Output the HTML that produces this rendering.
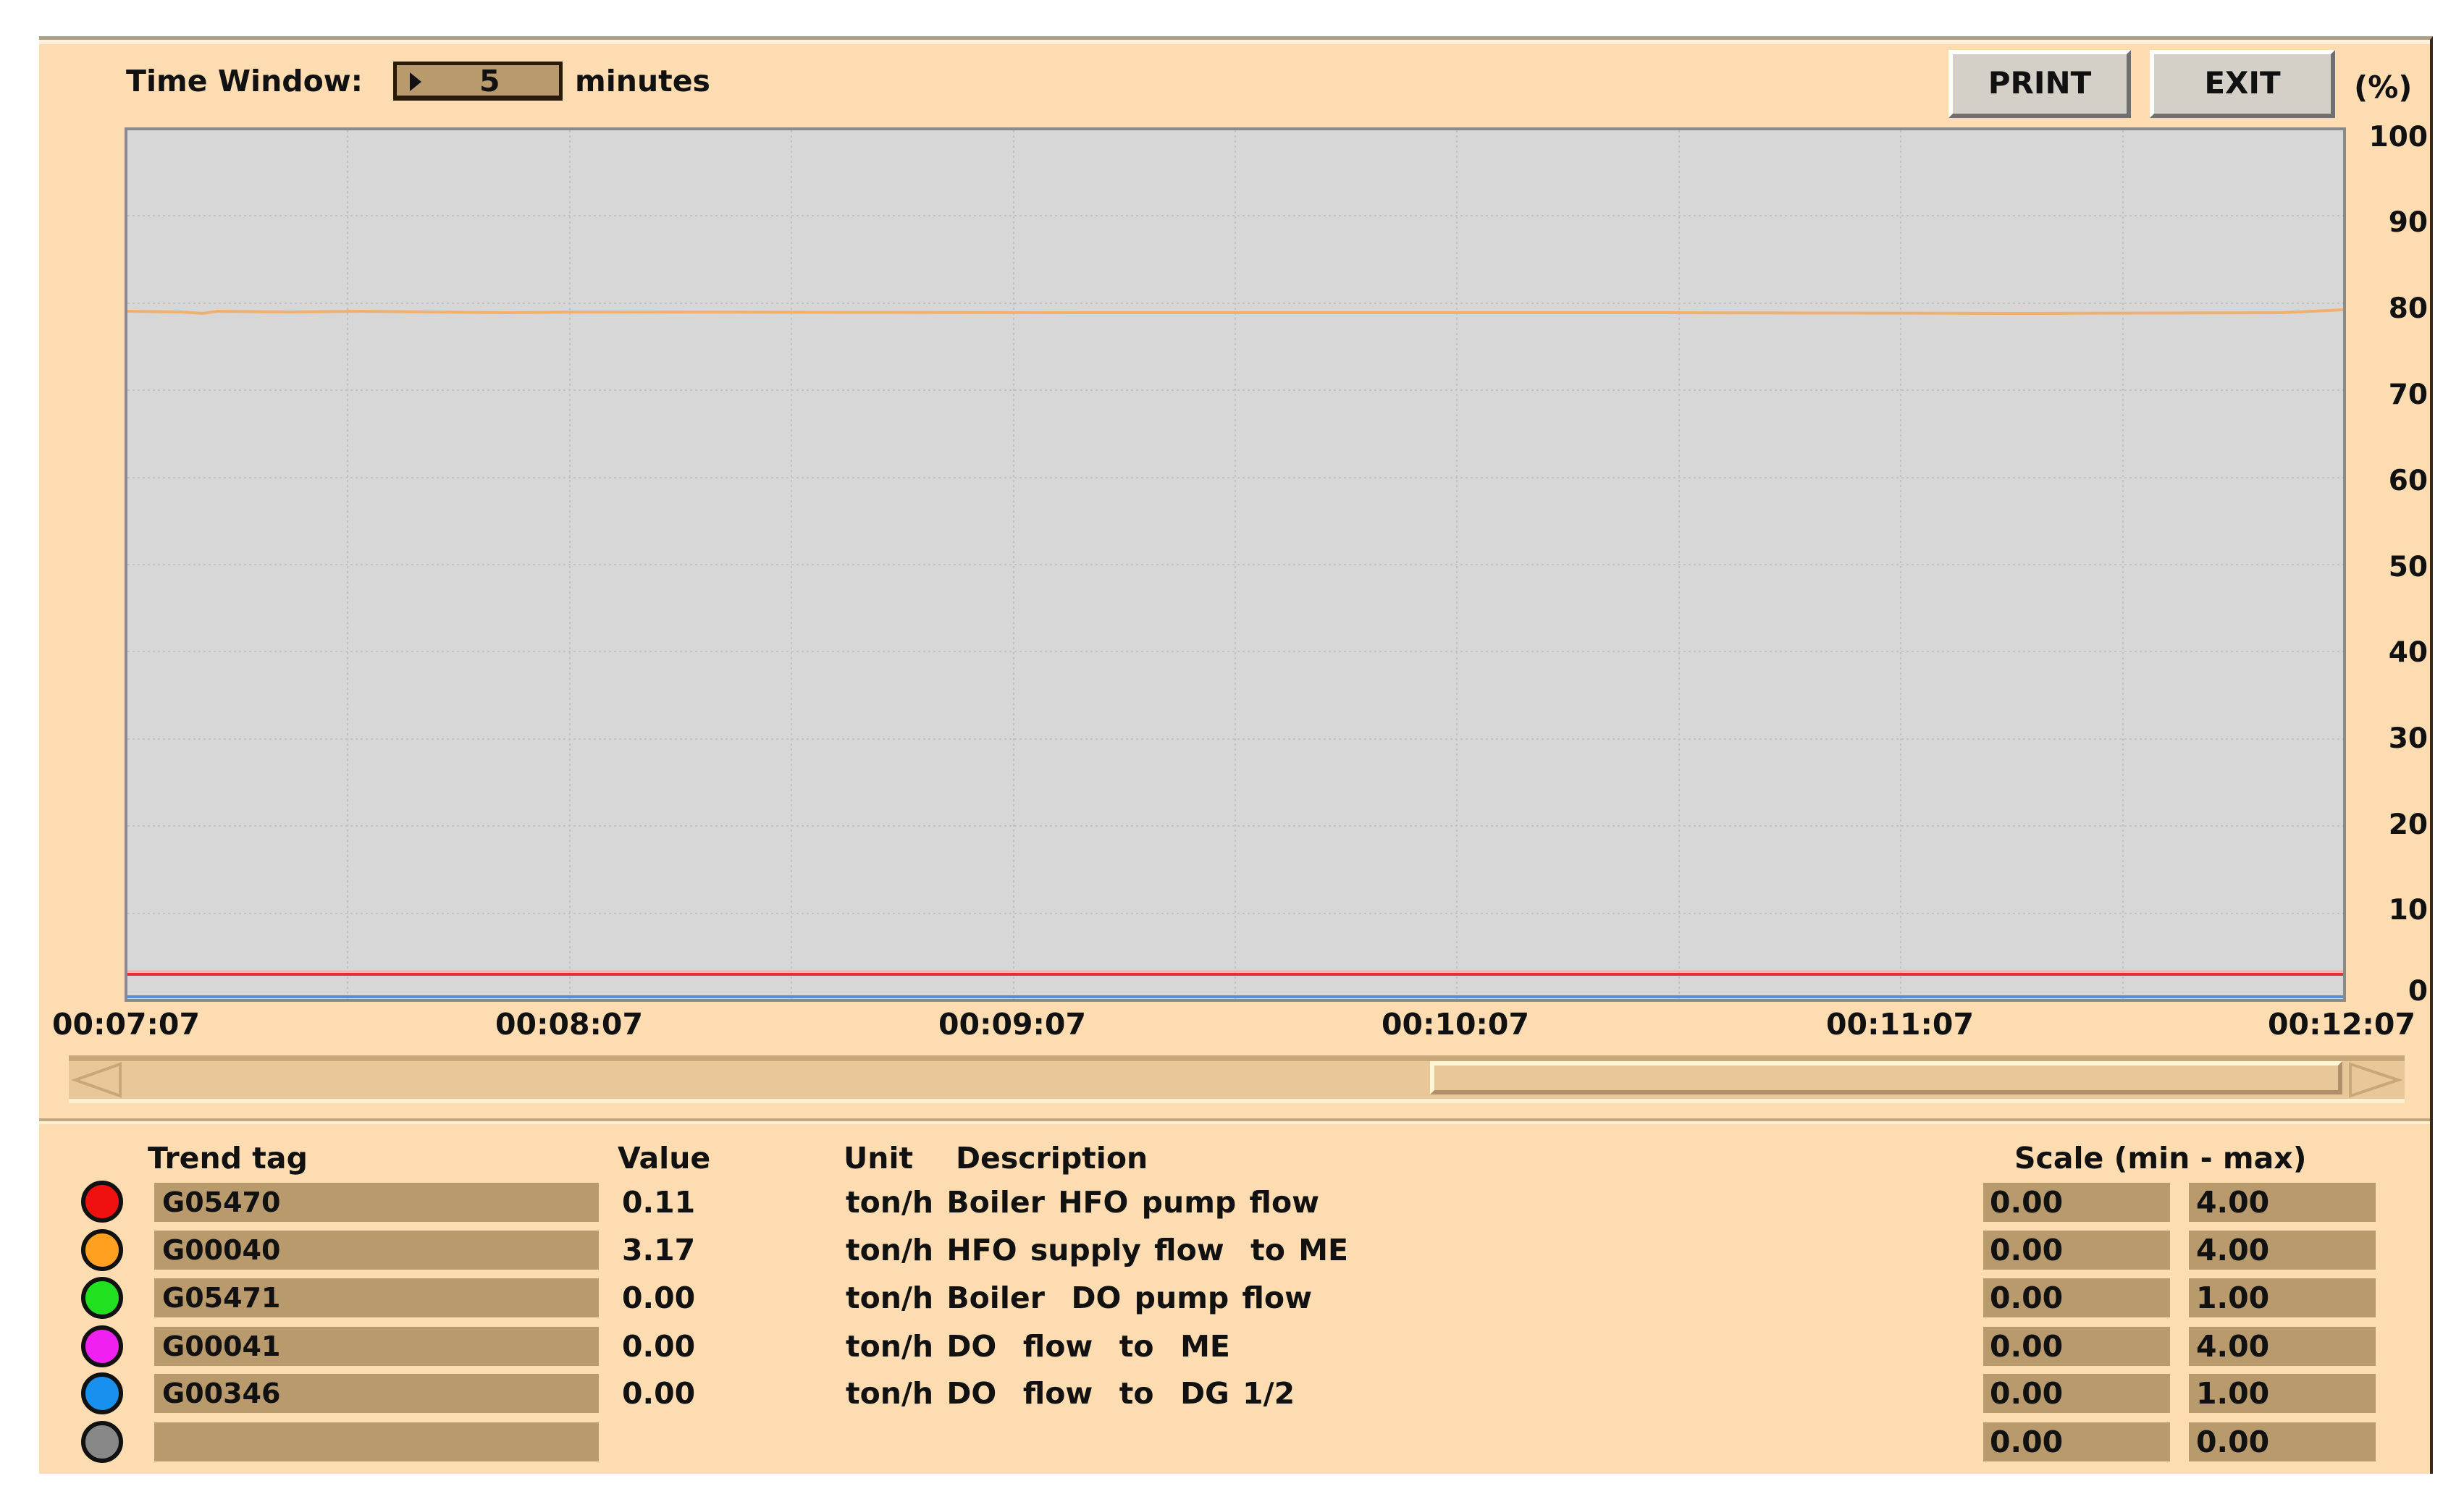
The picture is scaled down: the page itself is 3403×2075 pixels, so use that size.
<!DOCTYPE html>
<html><head><meta charset="utf-8"><style>
*{margin:0;padding:0;box-sizing:border-box}
body{width:3403px;height:2075px;background:#fff;position:relative;overflow:hidden;font-family:"DejaVu Sans","Liberation Sans",sans-serif;font-weight:bold;color:#111}
.a{position:absolute;white-space:nowrap}
.t{font-size:41px;line-height:1}
.y{font-size:39px;line-height:1}
.box{position:absolute;background:#b89a6c}
.btn{position:absolute;background:#d4d0c8;border-top:6px solid #fff;border-left:6px solid #fff;border-right:6px solid #6f6f6f;border-bottom:6px solid #6f6f6f;font-size:42px;text-align:center;line-height:80px}
.c{position:absolute;width:58px;height:58px;border-radius:50%;border:6px solid #111;left:112px}
.tm{transform:translateX(-50%)}
</style></head><body>
<div class="a" style="left:54px;top:50px;width:3306px;height:1986px;background:#fcdcb0;border-top:5px solid #a8a088;border-right:4px solid #3a2a1a"></div>
<div class="a" style="left:54px;top:55px;width:3302px;height:6px;background:#fff0d8"></div>

<div class="a t" style="left:174px;top:92px">Time Window:</div>
<div class="a" style="left:543px;top:85px;width:234px;height:54px;background:#b89a6c;border:5px solid #2a1a0a;border-bottom-width:7px"></div>
<div class="a" style="left:566px;top:100px;width:0;height:0;border-top:13px solid transparent;border-bottom:13px solid transparent;border-left:16px solid #111"></div>
<div class="a t" style="left:662px;top:92px">5</div>
<div class="a t" style="left:794px;top:92px">minutes</div>

<div class="btn" style="left:2691px;top:69px;width:252px;height:94px">PRINT</div>
<div class="btn" style="left:2969px;top:69px;width:256px;height:94px">EXIT</div>
<div class="a t" style="left:3251px;top:100px;font-size:42px">(%)</div>

<svg class="a" style="left:0;top:0" width="3403" height="1560">
<rect x="174" y="178" width="3064" height="1204" fill="#d7d7d7" stroke="#8a8a8a" stroke-width="4"/>
<g stroke="#c2c2c2" stroke-width="2" stroke-dasharray="3 4">
<line x1="480" y1="180" x2="480" y2="1380"/><line x1="787" y1="180" x2="787" y2="1380"/><line x1="1093" y1="180" x2="1093" y2="1380"/><line x1="1400" y1="180" x2="1400" y2="1380"/><line x1="1706" y1="180" x2="1706" y2="1380"/><line x1="2012" y1="180" x2="2012" y2="1380"/><line x1="2319" y1="180" x2="2319" y2="1380"/><line x1="2625" y1="180" x2="2625" y2="1380"/><line x1="2932" y1="180" x2="2932" y2="1380"/>
<line x1="176" y1="298" x2="3236" y2="298"/><line x1="176" y1="419" x2="3236" y2="419"/><line x1="176" y1="539" x2="3236" y2="539"/><line x1="176" y1="660" x2="3236" y2="660"/><line x1="176" y1="780" x2="3236" y2="780"/><line x1="176" y1="900" x2="3236" y2="900"/><line x1="176" y1="1021" x2="3236" y2="1021"/><line x1="176" y1="1141" x2="3236" y2="1141"/><line x1="176" y1="1262" x2="3236" y2="1262"/>
</g>
<polyline fill="none" stroke="#f0b070" stroke-width="4" points="176,430 250,431 280,433 300,430 400,431 500,430 700,432 800,431 1500,432 2300,432 2800,433 3150,432 3236,428"/>
<line x1="176" y1="1346" x2="3236" y2="1346" stroke="#e03030" stroke-width="4"/>
<line x1="176" y1="1342" x2="3236" y2="1342" stroke="#f4b0b0" stroke-width="3"/>
<line x1="176" y1="1377" x2="3236" y2="1377" stroke="#5a90d0" stroke-width="4"/>
</svg>

<div class="a y" style="right:50px;top:170px">100</div>
<div class="a y" style="right:50px;top:288px">90</div>
<div class="a y" style="right:50px;top:407px">80</div>
<div class="a y" style="right:50px;top:526px">70</div>
<div class="a y" style="right:50px;top:645px">60</div>
<div class="a y" style="right:50px;top:764px">50</div>
<div class="a y" style="right:50px;top:882px">40</div>
<div class="a y" style="right:50px;top:1001px">30</div>
<div class="a y" style="right:50px;top:1120px">20</div>
<div class="a y" style="right:50px;top:1238px">10</div>
<div class="a y" style="right:50px;top:1350px">0</div>

<div class="a t tm" style="left:174px;top:1395px">00:07:07</div>
<div class="a t tm" style="left:786px;top:1395px">00:08:07</div>
<div class="a t tm" style="left:1398px;top:1395px">00:09:07</div>
<div class="a t tm" style="left:2010px;top:1395px">00:10:07</div>
<div class="a t tm" style="left:2624px;top:1395px">00:11:07</div>
<div class="a t tm" style="left:3234px;top:1395px">00:12:07</div>

<div class="a" style="left:95px;top:1458px;width:3226px;height:66px;background:#e8c898;border-top:8px solid #c8a878;border-bottom:6px solid #fff0d0"></div>
<svg class="a" style="left:96px;top:1466px" width="80" height="52"><polygon points="70,4 8,26 70,48" fill="none" stroke="#c8a878" stroke-width="4"/></svg>
<div class="a" style="left:1975px;top:1466px;width:1260px;height:46px;background:#e8c898;border-top:6px solid #fff6d8;border-left:6px solid #fff6d8;border-bottom:6px solid #b09068;border-right:6px solid #b09068"></div>
<svg class="a" style="left:3238px;top:1466px" width="82" height="52"><polygon points="8,4 74,26 8,48" fill="none" stroke="#c8a878" stroke-width="4"/></svg>

<div class="a" style="left:54px;top:1545px;width:3302px;height:4px;background:#c0a880"></div>
<div class="a" style="left:54px;top:1549px;width:3302px;height:4px;background:#fff0d0"></div>

<div class="a t" style="left:204px;top:1580px">Trend tag</div>
<div class="a t" style="left:853px;top:1580px">Value</div>
<div class="a t" style="left:1165px;top:1580px">Unit</div>
<div class="a t" style="left:1320px;top:1580px">Description</div>
<div class="a t" style="left:2782px;top:1580px">Scale (min - max)</div>

<div class="c" style="top:1631px;background:#f01010"></div>
<div class="c" style="top:1698px;background:#ffa020"></div>
<div class="c" style="top:1764px;background:#20e020"></div>
<div class="c" style="top:1831px;background:#f020f0"></div>
<div class="c" style="top:1896px;background:#1890f0"></div>
<div class="c" style="top:1963px;background:#888"></div>

<div class="box" style="left:213px;top:1634px;width:614px;height:54px"></div>
<div class="box" style="left:213px;top:1700px;width:614px;height:54px"></div>
<div class="box" style="left:213px;top:1766px;width:614px;height:54px"></div>
<div class="box" style="left:213px;top:1833px;width:614px;height:54px"></div>
<div class="box" style="left:213px;top:1898px;width:614px;height:54px"></div>
<div class="box" style="left:213px;top:1965px;width:614px;height:54px"></div>
<div class="box" style="left:2739px;top:1634px;width:258px;height:54px"></div>
<div class="box" style="left:2739px;top:1700px;width:258px;height:54px"></div>
<div class="box" style="left:2739px;top:1766px;width:258px;height:54px"></div>
<div class="box" style="left:2739px;top:1833px;width:258px;height:54px"></div>
<div class="box" style="left:2739px;top:1898px;width:258px;height:54px"></div>
<div class="box" style="left:2739px;top:1965px;width:258px;height:54px"></div>
<div class="box" style="left:3023px;top:1634px;width:258px;height:54px"></div>
<div class="box" style="left:3023px;top:1700px;width:258px;height:54px"></div>
<div class="box" style="left:3023px;top:1766px;width:258px;height:54px"></div>
<div class="box" style="left:3023px;top:1833px;width:258px;height:54px"></div>
<div class="box" style="left:3023px;top:1898px;width:258px;height:54px"></div>
<div class="box" style="left:3023px;top:1965px;width:258px;height:54px"></div>

<div class="a t" style="left:224px;top:1642px;font-size:38px">G05470</div>
<div class="a t" style="left:224px;top:1708px;font-size:38px">G00040</div>
<div class="a t" style="left:224px;top:1774px;font-size:38px">G05471</div>
<div class="a t" style="left:224px;top:1841px;font-size:38px">G00041</div>
<div class="a t" style="left:224px;top:1906px;font-size:38px">G00346</div>

<div class="a t" style="left:859px;top:1641px">0.11</div>
<div class="a t" style="left:859px;top:1707px">3.17</div>
<div class="a t" style="left:859px;top:1773px">0.00</div>
<div class="a t" style="left:859px;top:1840px">0.00</div>
<div class="a t" style="left:859px;top:1905px">0.00</div>

<div class="a t" style="left:1168px;top:1641px;word-spacing:4px">ton/h Boiler HFO pump flow</div>
<div class="a t" style="left:1168px;top:1707px;word-spacing:4px">ton/h HFO supply flow&nbsp; to ME</div>
<div class="a t" style="left:1168px;top:1773px;word-spacing:4px">ton/h Boiler&nbsp; DO pump flow</div>
<div class="a t" style="left:1168px;top:1840px;word-spacing:4px">ton/h DO&nbsp; flow&nbsp; to&nbsp; ME</div>
<div class="a t" style="left:1168px;top:1905px;word-spacing:4px">ton/h DO&nbsp; flow&nbsp; to&nbsp; DG 1/2</div>

<div class="a t" style="left:2748px;top:1641px">0.00</div>
<div class="a t" style="left:2748px;top:1707px">0.00</div>
<div class="a t" style="left:2748px;top:1773px">0.00</div>
<div class="a t" style="left:2748px;top:1840px">0.00</div>
<div class="a t" style="left:2748px;top:1905px">0.00</div>
<div class="a t" style="left:2748px;top:1972px">0.00</div>
<div class="a t" style="left:3033px;top:1641px">4.00</div>
<div class="a t" style="left:3033px;top:1707px">4.00</div>
<div class="a t" style="left:3033px;top:1773px">1.00</div>
<div class="a t" style="left:3033px;top:1840px">4.00</div>
<div class="a t" style="left:3033px;top:1905px">1.00</div>
<div class="a t" style="left:3033px;top:1972px">0.00</div>
</body></html>
